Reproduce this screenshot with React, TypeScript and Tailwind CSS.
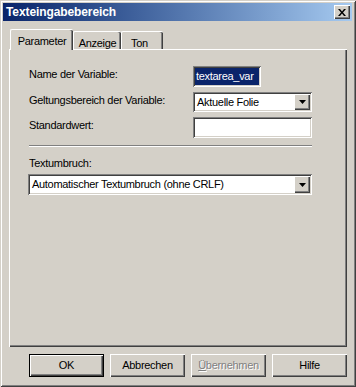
import React from 'react';

const raised =
  'shadow-[inset_1px_1px_0_#ffffff,inset_-1px_-1px_0_#404040,inset_-2px_-2px_0_#808080]';
const sunken =
  'shadow-[inset_1px_1px_0_#808080,inset_-1px_-1px_0_#ffffff,inset_2px_2px_0_#404040,inset_-2px_-2px_0_#d4d0c8]';

function DropArrow() {
  return (
    <div className={`flex h-full w-[16px] shrink-0 items-center justify-center bg-[#d4d0c8] ${raised}`}>
      <svg width="7" height="4" viewBox="0 0 7 4">
        <path d="M0 0h7L3.5 4z" fill="#000" />
      </svg>
    </div>
  );
}

function Select({ value, className }: { value: string; className: string }) {
  return (
    <div className={`flex bg-white p-[2px] ${sunken} ${className}`}>
      <div className="flex flex-1 items-center pl-[2px] leading-none">{value}</div>
      <DropArrow />
    </div>
  );
}

function Button({ label, isDefault, disabled }: { label: React.ReactNode; isDefault?: boolean; disabled?: boolean }) {
  return (
    <div className={`h-[23px] w-[75px] ${isDefault ? 'border border-black' : ''}`}>
      <div
        className={`flex h-full w-full items-center justify-center bg-[#d4d0c8] ${raised} ${
          disabled ? 'text-[#808080] [text-shadow:1px_1px_0_#ffffff]' : 'text-black'
        }`}
      >
        {label}
      </div>
    </div>
  );
}

export default function App() {
  return (
    <div className="h-[387px] w-[356px] bg-[#d4d0c8] pl-[3px] pr-[4px] pt-[3px] font-['Liberation_Sans',Arial,sans-serif] text-[11px] tracking-[-0.3px] text-black shadow-[inset_1px_1px_0_#d4d0c8,inset_-1px_-1px_0_#404040,inset_2px_2px_0_#ffffff,inset_-2px_-2px_0_#808080]">
      {/* title bar */}
      <div className="flex h-[18px] items-center justify-between bg-gradient-to-r from-[#0a246a] to-[#a6caf0] pl-[3px] pr-[2px]">
        <span className="text-[12px] font-bold tracking-[-0.1px] text-white">Texteingabebereich</span>
        <div className={`flex h-[14px] w-[16px] items-center justify-center bg-[#d4d0c8] ${raised}`}>
          <svg width="8" height="7" viewBox="0 0 8 7">
            <path d="M0 0h2l2 2.5L6 0h2L5 3.5 8 7H6L4 4.5 2 7H0l3-3.5z" fill="#000" />
          </svg>
        </div>
      </div>

      <div className="ml-[6px] mr-[5px] mt-[8px]">
        {/* tabs */}
        <div className="flex h-[20px] items-end pl-[1px]">
          <div className="relative z-10 -mb-px flex h-[21px] w-[63px] items-start justify-center rounded-t-[2px] border-l border-t border-white bg-[#d4d0c8] pt-[3px] shadow-[inset_-1px_0_0_#404040,inset_-2px_0_0_#808080]">
            Parameter
          </div>
          <div className="flex h-[18px] w-[48px] items-start justify-center rounded-t-[2px] border-l border-t border-white pt-[3px] shadow-[inset_-1px_0_0_#404040,inset_-2px_0_0_#808080]">
            Anzeige
          </div>
          <div className="flex h-[18px] w-[42px] items-start justify-center rounded-t-[2px] border-l border-t border-white pt-[3px] pr-[6px] shadow-[inset_-1px_0_0_#404040,inset_-2px_0_0_#808080]">
            Ton
          </div>
        </div>

        {/* panel */}
        <div className="h-[298px] border-l border-t border-white pl-[19px] pt-[16px] shadow-[inset_-1px_-1px_0_#404040,inset_-2px_-2px_0_#808080]">
          <div className="flex h-[21px]">
            <div className="w-[164px] pt-[2px] leading-[13px]">Name der Variable:</div>
            <div className={`flex h-[21px] w-[68px] bg-white p-[2px] ${sunken}`}>
              <div className="flex flex-1 items-center bg-[#0a246a] pl-[1px] leading-none text-white">textarea_var</div>
            </div>
          </div>
          <div className="mt-[5px] flex h-[20px]">
            <div className="w-[164px] pt-[2px] leading-[13px]">Geltungsbereich der Variable:</div>
            <Select value="Aktuelle Folie" className="h-[20px] w-[119px]" />
          </div>
          <div className="mt-[5px] flex h-[21px]">
            <div className="w-[164px] pt-[2px] leading-[13px]">Standardwert:</div>
            <div className={`h-[21px] w-[119px] bg-white ${sunken}`} />
          </div>

          <div className="mt-[7px] h-[2px] w-[283px] border-t border-b border-t-[#808080] border-b-white" />

          <div className="mt-[10px] h-[13px] leading-[13px]">Textumbruch:</div>
          <Select value="Automatischer Textumbruch (ohne CRLF)" className="-ml-px mt-[4px] h-[21px] w-[284px]" />
        </div>

        {/* buttons */}
        <div className="mt-[7px] flex justify-end gap-[6px]">
          <Button label="OK" isDefault />
          <Button label="Abbrechen" />
          <Button
            label={
              <span>
                <span className="underline">Ü</span>bernehmen
              </span>
            }
            disabled
          />
          <Button label="Hilfe" />
        </div>
      </div>
    </div>
  );
}
